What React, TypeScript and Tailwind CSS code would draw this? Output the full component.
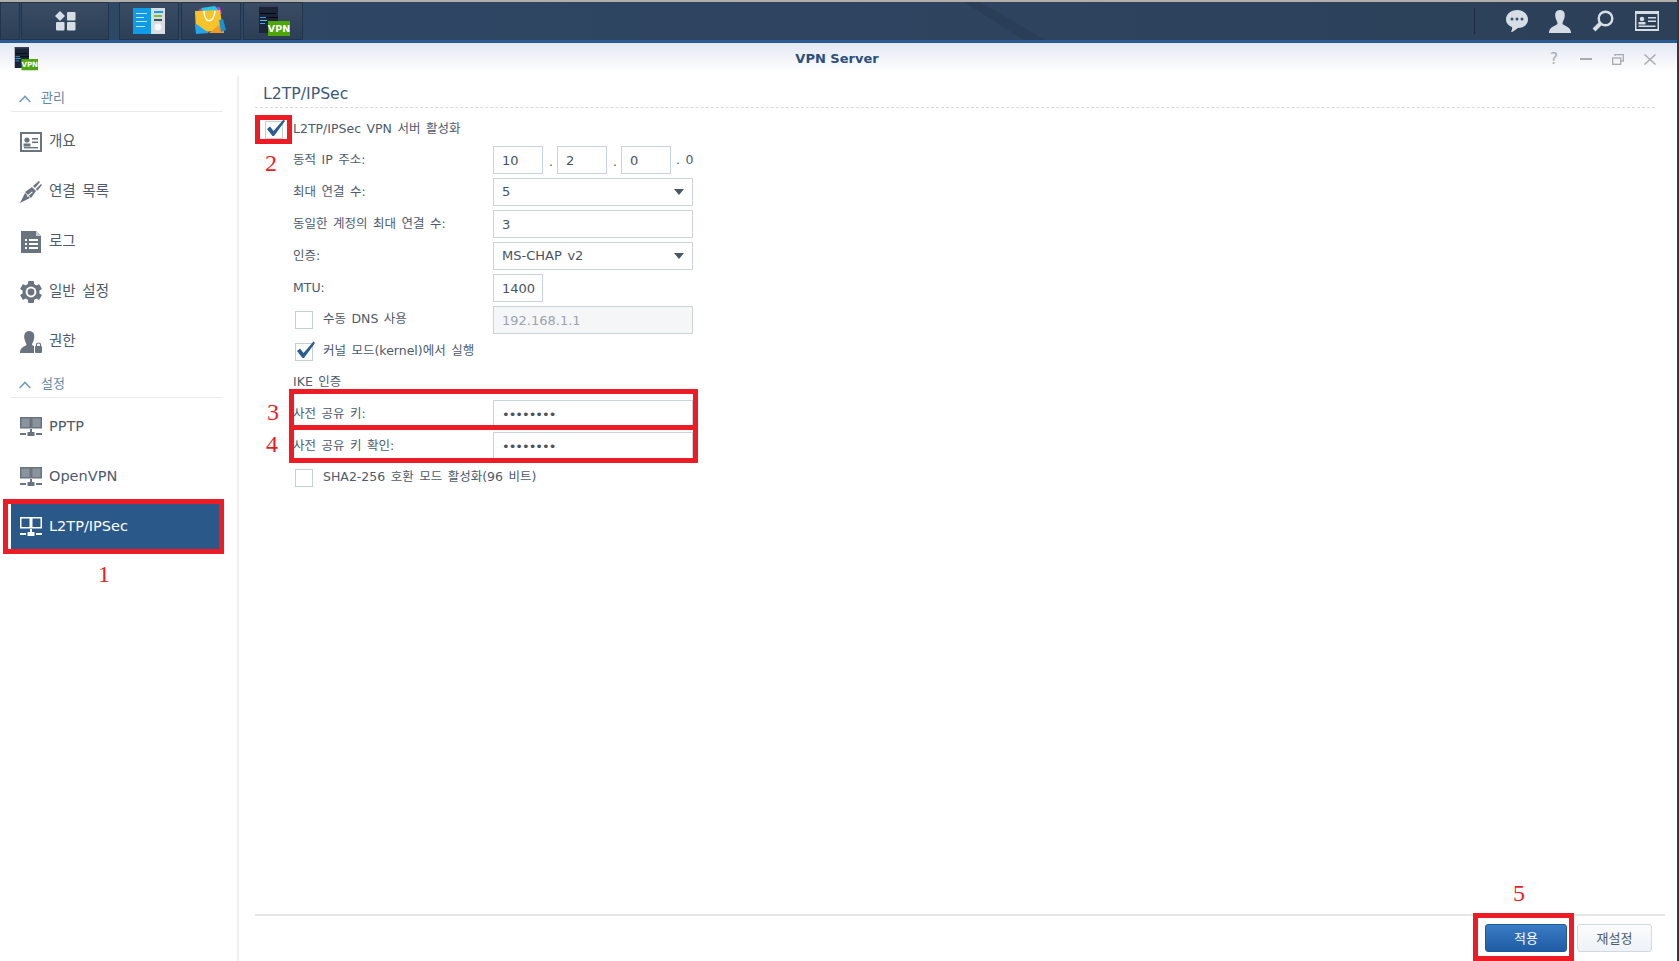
import type { ReactNode } from 'react';

const FONT = 'font-["DejaVu_Sans","Noto_Sans_CJK_KR",sans-serif]';

function VpnIcon({ size }: { size: number }) {
  return (
    <svg width={size} height={size} viewBox="0 0 32 32">
      <rect x="1" y="0" width="19" height="28" fill="#1c2438" />
      <rect x="1" y="0" width="19" height="2" fill="#39425c" />
      <rect x="2" y="8" width="16" height="1" fill="#05080f" />
      <rect x="2" y="12" width="6" height="1" fill="#2f9de0" />
      <rect x="8" y="12" width="12" height="1" fill="#05080f" />
      <rect x="2" y="15" width="7" height="1" fill="#57c6f0" />
      <rect x="2" y="18" width="5" height="1" fill="#37b0e8" />
      <rect x="10" y="16" width="22" height="15" fill="#4fa60a" />
      <text x="21" y="27" textAnchor="middle" fontSize="9.5" fontWeight="700" fill="#ffffff" fontFamily="DejaVu Sans">
        VPN
      </text>
    </svg>
  );
}

function StoreIcon() {
  return (
    <svg width="32" height="30" viewBox="0 0 32 30">
      <polygon points="4,3 25,1 27,8 5,8" fill="#b43ee0" />
      <polygon points="6,2 20,0 24,5 8,5" fill="#27c6e8" />
      <polygon points="0,5 25,4 28,24 1,27" fill="#f6c42a" />
      <polygon points="0,17 14,27 1,28" fill="#23a5ea" />
      <polygon points="14,27 28,16 29,27" fill="#f19a2a" />
      <path d="M9 5 C9 18 19 18 20 5" fill="none" stroke="#ffffff" strokeWidth="1.4" />
      <polygon points="24,14 28,13 31,24 26,26" fill="#1e8fd0" />
    </svg>
  );
}

function PanelIcon() {
  return (
    <svg width="32" height="26" viewBox="0 0 32 26">
      <rect x="0" y="0" width="32" height="26" fill="#0f9be8" />
      <rect x="18" y="0" width="14" height="26" fill="#d8dde2" />
      <rect x="21" y="3" width="9" height="2" fill="#1e9ee0" />
      <rect x="21" y="7" width="8" height="2" fill="#7cc22e" />
      <rect x="21" y="11" width="8" height="2" fill="#3d4f60" />
      <circle cx="25" cy="19" r="3.5" fill="#f5f7f9" />
      <rect x="3" y="5" width="11" height="1" fill="#bfe6fb" />
      <rect x="3" y="9" width="8" height="1" fill="#bfe6fb" />
      <rect x="3" y="13" width="11" height="1" fill="#bfe6fb" />
      <rect x="3" y="18" width="9" height="1" fill="#bfe6fb" />
    </svg>
  );
}

function CardIcon({ color = '#6a7480', size = 22 }: { color?: string; size?: number }) {
  return (
    <svg width={size} height={size - 2} viewBox="0 0 22 20">
      <rect x="0" y="0" width="22" height="20" fill={color} />
      <rect x="2" y="2" width="18" height="16" fill="#ffffff" />
      <circle cx="7" cy="8" r="2.6" fill={color} />
      <rect x="3.5" y="11.5" width="7" height="3" fill={color} />
      <rect x="12" y="6" width="6" height="1.6" fill={color} />
      <rect x="12" y="9.5" width="6" height="1.6" fill={color} />
      <rect x="4" y="15" width="14" height="1.4" fill={color} />
    </svg>
  );
}

function PlugIcon() {
  return (
    <svg width="22" height="22" viewBox="0 0 22 22" fill="#6a7480">
      <polygon points="0,22 5,12 10,17" />
      <polygon points="5,11 12,6 16,10 11,17" />
      <polygon points="13,5 19,0 20,1 15,7" />
      <polygon points="16,8 21,3 22,4 17,10" />
      <rect x="6" y="13" width="7" height="1.2" fill="#ffffff" transform="rotate(-40 9 13)" />
    </svg>
  );
}

function LogIcon() {
  return (
    <svg width="22" height="22" viewBox="0 0 20 22">
      <path d="M0 0 H15 L20 5 V22 H0 Z" fill="#6a7480" />
      <path d="M15 0 L20 5 H15 Z" fill="#c8ced4" />
      <g fill="#ffffff">
        <rect x="4" y="8" width="2" height="2" />
        <rect x="8" y="8" width="9" height="2" />
        <rect x="4" y="12" width="2" height="2" />
        <rect x="8" y="12" width="9" height="2" />
        <rect x="4" y="16" width="2" height="2" />
        <rect x="8" y="16" width="9" height="2" />
      </g>
    </svg>
  );
}

function GearIcon() {
  return (
    <svg width="22" height="22" viewBox="0 0 22 22">
      <g fill="#6a7480">
        <circle cx="11" cy="11" r="8.5" />
        {[0, 60, 120, 180, 240, 300].map((a) => (
          <rect key={a} x="8" y="0" width="6" height="5" rx="1" transform={`rotate(${a} 11 11)`} />
        ))}
      </g>
      <circle cx="11" cy="11" r="5.4" fill="#ffffff" />
      <circle cx="11" cy="11" r="3.4" fill="#6a7480" />
    </svg>
  );
}

function PrivilegeIcon() {
  return (
    <svg width="22" height="22" viewBox="0 0 22 22">
      <path d="M9 0 C14 0 15 4 14 8 C13.500 11 12 12 12 14 L14 15 V22 H0 C0 17 3 16 6.500 14 C6.500 12 5 11 4.500 8 C3.500 4 5 0 9 0 Z" fill="#6a7480" />
      <rect x="15" y="15" width="7" height="7" rx="1" fill="#6a7480" />
      <path d="M16.500 15 V13.500 C16.500 11.500 20.500 11.500 20.500 13.500 V15" fill="none" stroke="#6a7480" strokeWidth="1.2" />
    </svg>
  );
}

function NetIcon({ color = '#6a7480', fill = '#8b939c' }: { color?: string; fill?: string }) {
  return (
    <svg width="22" height="20" viewBox="0 0 22 20">
      <rect x="0.750" y="0.750" width="9.500" height="10" fill={fill} stroke={color} strokeWidth="1.500" />
      <rect x="11.750" y="0.750" width="9.500" height="10" fill={fill} stroke={color} strokeWidth="1.500" />
      <rect x="10" y="12" width="2" height="3" fill={color} />
      <rect x="7.500" y="15" width="7" height="4" fill={color} />
      <rect x="0" y="16" width="6" height="2" fill={color} />
      <rect x="16" y="16" width="6" height="2" fill={color} />
    </svg>
  );
}

function Chevron() {
  return (
    <svg width="12" height="8" viewBox="0 0 12 8" fill="none" stroke="#6f9dbf" strokeWidth="1.6">
      <path d="M0.700 7 L6 1.500 L11.300 7" />
    </svg>
  );
}

function SectionHeader({ label, className }: { label: string; className: string }) {
  return (
    <div className={`ml-[11px] mr-[14px] flex items-end gap-[10px] border-b border-[#e8eaed] pl-[8px] pb-[5px] text-[13px] text-[#5f89a8] ${className}`}>
      <span className="mb-[3px]">
        <Chevron />
      </span>
      <span className="leading-[16px]">{label}</span>
    </div>
  );
}

function NavItem({ icon, label, active }: { icon: ReactNode; label: string; active?: boolean }) {
  return (
    <div
      className={`mb-[5px] ml-[8px] mr-[17px] flex h-[45px] items-center gap-[7px] text-[14.500px] [word-spacing:2px] ${
        active ? 'border-l-[3px] border-white bg-[#2a5889] pl-[9px] text-white' : 'pl-[12px] text-[#4c5b6b]'
      }`}
    >
      <span className="flex w-[22px] justify-center">{icon}</span>
      <span>{label}</span>
    </div>
  );
}

function Sidebar() {
  return (
    <aside className="mt-[4px] w-[239px] shrink-0 border-r-2 border-[#eceef0]">
      <SectionHeader label="관리" className="h-[36px]" />
      <div className="pt-[7px]">
        <NavItem icon={<CardIcon />} label="개요" />
        <NavItem icon={<PlugIcon />} label="연결 목록" />
        <NavItem icon={<LogIcon />} label="로그" />
        <NavItem icon={<GearIcon />} label="일반 설정" />
        <NavItem icon={<PrivilegeIcon />} label="권한" />
      </div>
      <SectionHeader label="설정" className="h-[29px]" />
      <div className="pt-[6px]">
        <NavItem icon={<NetIcon />} label="PPTP" />
        <NavItem icon={<NetIcon />} label="OpenVPN" />
        <NavItem icon={<NetIcon color="#ffffff" fill="#2a5889" />} label="L2TP/IPSec" active />
      </div>
    </aside>
  );
}

function Check({ checked }: { checked?: boolean }) {
  return (
    <span className="relative block h-[18px] w-[18px] shrink-0 border border-[#c4cfdc] bg-white">
      {checked && (
        <svg className="absolute -left-[1px] -top-[4px]" width="22" height="20" viewBox="0 0 22 20">
          <path d="M2 11 L5 8.500 L8.500 13 L18.500 1.500 L20 3 L9 18 L7.500 18 Z" fill="#2d5c92" />
        </svg>
      )}
    </span>
  );
}

function Field({ value, width, disabled, type }: { value: string; width: string; disabled?: boolean; type?: string }) {
  return (
    <input
      readOnly
      type={type ?? 'text'}
      value={value}
      className={`h-[28px] ${width} border border-[#c8d3df] pl-[8px] text-[13px] outline-none ${
        type === 'password' ? 'tracking-[-1px]' : ''
      } ${disabled ? 'bg-[#f4f6f8] text-[#9aa4ae]' : 'bg-white text-[#47535f]'}`}
    />
  );
}

function SelectField({ value }: { value: string }) {
  return (
    <div className="flex h-[28px] w-[200px] items-center justify-between border border-[#c8d3df] bg-white pl-[8px] pr-[8px] text-[13px] text-[#47535f]">
      <span>{value}</span>
      <span className="h-0 w-0 border-x-[5px] border-t-[6px] border-x-transparent border-t-[#4a5661]" />
    </div>
  );
}

function Row({ label, children }: { label: string; children: ReactNode }) {
  return (
    <div className="mb-[4px] flex h-[28px] items-center">
      <span className="w-[200px] text-[#4c5b6b]">{label}</span>
      {children}
    </div>
  );
}

function CheckRow({ label, checked, children }: { label: string; checked?: boolean; children?: ReactNode }) {
  return (
    <div className="mb-[4px] flex h-[28px] items-center">
      <span className="flex w-[200px] items-center">
        <span className="ml-[2px] mr-[10px]">
          <Check checked={checked} />
        </span>
        <span className="whitespace-nowrap pb-[2px] text-[#4c5b6b]">{label}</span>
      </span>
      {children}
    </div>
  );
}

function Form() {
  return (
    <div className="flex-1 pl-[54px] text-[12.500px] [word-spacing:1.500px]">
      <div className="mb-[2px] mt-[8px] flex h-[28px] items-center text-[#4c5b6b]">
        <span className="-ml-[28px] mr-[10px]">
          <Check checked />
        </span>
        <span className="pb-[2px]">L2TP/IPSec VPN 서버 활성화</span>
      </div>
      <Row label="동적 IP 주소:">
        <Field value="10" width="w-[50px]" />
        <span className="w-[14px] pl-[6px] pt-[4px] text-[#4c5b6b]">.</span>
        <Field value="2" width="w-[50px]" />
        <span className="w-[14px] pl-[6px] pt-[4px] text-[#4c5b6b]">.</span>
        <Field value="0" width="w-[50px]" />
        <span className="pl-[5px] text-[#4c5b6b]">. 0</span>
      </Row>
      <Row label="최대 연결 수:">
        <SelectField value="5" />
      </Row>
      <Row label="동일한 계정의 최대 연결 수:">
        <Field value="3" width="w-[200px]" />
      </Row>
      <Row label="인증:">
        <SelectField value="MS-CHAP v2" />
      </Row>
      <Row label="MTU:">
        <Field value="1400" width="w-[50px]" />
      </Row>
      <CheckRow label="수동 DNS 사용">
        <Field value="192.168.1.1" width="w-[200px]" disabled />
      </CheckRow>
      <CheckRow label="커널 모드(kernel)에서 실행" checked />
      <div className="mb-[6px] flex h-[24px] items-center text-[#4c5b6b]">IKE 인증</div>
      <Row label="사전 공유 키:">
        <Field value="12345678" width="w-[200px]" type="password" />
      </Row>
      <Row label="사전 공유 키 확인:">
        <Field value="12345678" width="w-[200px]" type="password" />
      </Row>
      <CheckRow label="SHA2-256 호환 모드 활성화(96 비트)" />
    </div>
  );
}

function Main() {
  return (
    <main className="flex min-w-0 flex-1 flex-col">
      <div className="ml-[16px] mr-[22px] flex h-[36px] items-center border-b border-dashed border-[#d8dce0] pl-[8px] pt-[8px] text-[15.700px] text-[#3e5a78]">
        L2TP/IPSec
      </div>
      <Form />
      <div className="ml-[16px] mr-[12px] flex h-[47px] justify-end gap-[10px] border-t-2 border-[#e4e6e8] pr-[13px] pt-[8px] text-[13px]">
        <button className="h-[28px] w-[82px] rounded-[3px] border border-[#1d5a9c] bg-gradient-to-b from-[#3a7cc6] to-[#1f5ca3] pt-[2px] text-white">
          적용
        </button>
        <button className="h-[28px] w-[75px] rounded-[3px] border border-[#d0d8e2] bg-gradient-to-b from-[#fbfcfd] to-[#eef2f6] pt-[2px] text-[#4c5b6b]">
          재설정
        </button>
      </div>
    </main>
  );
}

function TaskButton({ width, children }: { width: string; children?: ReactNode }) {
  return (
    <div className={`flex h-[38px] ${width} items-center justify-center border border-[#22344a] bg-gradient-to-b from-[#3a4c63] to-[#2b3f57]`}>
      {children}
    </div>
  );
}

function Taskbar() {
  return (
    <header className="relative flex h-[43px] shrink-0 items-center justify-between border-t-2 border-b-[3px] border-t-[#b4aeaa] border-b-[#2a5b95] bg-gradient-to-r from-[#2e4866] via-[#2e4460] to-[#2c4058]">
      <svg className="absolute left-[960px] top-0" width="85" height="38" viewBox="0 0 85 38">
        <polygon points="4,0 20,0 85,38 64,38" fill="#27384d" fillOpacity="0.4" />
      </svg>
      <div className="relative flex items-center">
        <TaskButton width="w-[20px]" />
        <div className="w-[1px]" />
        <TaskButton width="w-[88px]">
          <svg width="21" height="20" viewBox="0 0 21 20" fill="#d6dde5">
            <polygon points="5,0 10,5 5,10 0,5" />
            <rect x="12" y="1" width="8.500" height="8.500" rx="1" />
            <rect x="1" y="11" width="8.500" height="8.500" rx="1" />
            <rect x="12" y="11" width="8.500" height="8.500" rx="1" />
          </svg>
        </TaskButton>
        <div className="w-[10px]" />
        <TaskButton width="w-[60px]">
          <PanelIcon />
        </TaskButton>
        <div className="w-[2px]" />
        <TaskButton width="w-[60px]">
          <StoreIcon />
        </TaskButton>
        <div className="w-[2px]" />
        <TaskButton width="w-[60px]">
          <span className="ml-[2px]">
            <VpnIcon size={32} />
          </span>
        </TaskButton>
      </div>
      <div className="relative flex items-center gap-[21px] pr-[18px]">
        <div className="mr-[10px] h-[26px] w-[1px] bg-[#1c2a3b]" />
        <svg width="22" height="24" viewBox="0 0 22 24">
          <path d="M11 1 C17 1 22 5 22 10.500 C22 16 17 19 12 19 C9 21 7 23 5 23 C6 21 6.500 19 6 18 C2.500 16.500 0 14 0 10.500 C0 5 5 1 11 1 Z" fill="#d6dde5" />
          <circle cx="6" cy="10" r="1.500" fill="#3a5068" />
          <circle cx="11" cy="10" r="1.500" fill="#3a5068" />
          <circle cx="16" cy="10" r="1.500" fill="#3a5068" />
        </svg>
        <svg width="22" height="23" viewBox="0 0 22 23">
          <path d="M11 0 C15 0 16.500 3.500 15.500 7.500 C15 10 13.500 11.500 13.500 14 C16 16 22 17 22 23 H0 C0 17 6 16 8.500 14 C8.500 11.500 7 10 6.500 7.500 C5.500 3.500 7 0 11 0 Z" fill="#d6dde5" />
        </svg>
        <svg width="22" height="22" viewBox="0 0 22 22" fill="none" stroke="#d6dde5">
          <circle cx="13.500" cy="8.500" r="6.800" strokeWidth="2.400" />
          <path d="M8.500 13.500 L2 20" strokeWidth="4" />
        </svg>
        <svg width="24" height="20" viewBox="0 0 24 20">
          <rect x="0" y="0" width="24" height="20" fill="#d6dde5" />
          <rect x="1.500" y="3" width="21" height="15" fill="#2c4058" />
          <circle cx="7" cy="8" r="2.300" fill="#d6dde5" />
          <rect x="3.500" y="11" width="7" height="2.500" fill="#d6dde5" />
          <rect x="13" y="6" width="8" height="1.500" fill="#d6dde5" />
          <rect x="13" y="9.500" width="8" height="1.500" fill="#d6dde5" />
          <rect x="3.500" y="14.500" width="17" height="1.500" fill="#d6dde5" />
        </svg>
      </div>
    </header>
  );
}

function TitleBar() {
  return (
    <div className="flex h-[29px] shrink-0 items-center bg-gradient-to-b from-[#e3e8f2] to-white pl-[14px] pr-[20px] pt-[3px]">
      <div className="flex-1">
        <VpnIcon size={24} />
      </div>
      <span className="ml-[3px] text-[13px] font-bold text-[#2c4f7c]">VPN Server</span>
      <div className="flex flex-1 items-center justify-end gap-[18px] text-[#a6abb1]">
        <span className="w-[14px] text-center text-[15px] leading-none">?</span>
        <span className="flex w-[14px] justify-center">
          <span className="h-[2px] w-[12px] bg-[#a6abb1]" />
        </span>
        <span className="flex w-[14px] justify-center">
          <svg width="12" height="11" viewBox="0 0 12 11" fill="none" stroke="#a6abb1" strokeWidth="1.300">
            <rect x="0.700" y="4" width="8" height="6.300" />
            <path d="M3 2 V0.700 H11.300 V7 H9" />
          </svg>
        </span>
        <span className="flex w-[14px] justify-center">
          <svg width="12" height="11" viewBox="0 0 12 11" fill="none" stroke="#a6abb1" strokeWidth="1.400">
            <path d="M0.500 0.500 L11.500 10.500 M11.500 0.500 L0.500 10.500" />
          </svg>
        </span>
      </div>
    </div>
  );
}

function Annotations() {
  return (
    <div className='pointer-events-none absolute inset-0 font-["Liberation_Serif",serif] text-[24px] leading-none text-[#ed1c24]'>
      <div className="absolute left-[3px] top-[499px] h-[55px] w-[221px] border-[5px] border-[#ed1c24]" />
      <div className="absolute left-[255px] top-[115px] h-[29px] w-[37px] border-[5px] border-[#ed1c24]" />
      <div className="absolute left-[289px] top-[389px] h-[41px] w-[409px] border-[5px] border-[#ed1c24]" />
      <div className="absolute left-[289px] top-[425px] h-[38px] w-[409px] border-[5px] border-[#ed1c24]" />
      <div className="absolute left-[1473px] top-[913px] h-[48px] w-[101px] border-[5px] border-[#ed1c24]" />
      <span className="absolute left-[98px] top-[562px]">1</span>
      <span className="absolute left-[265px] top-[151px]">2</span>
      <span className="absolute left-[267px] top-[400px]">3</span>
      <span className="absolute left-[266px] top-[432px]">4</span>
      <span className="absolute left-[1513px] top-[881px]">5</span>
    </div>
  );
}

export default function App() {
  return (
    <div className={`relative flex h-[961px] w-full flex-col overflow-hidden border-r-2 border-[#33383f] bg-white ${FONT}`}>
      <Taskbar />
      <TitleBar />
      <div className="flex min-h-0 flex-1">
        <Sidebar />
        <Main />
      </div>
      <Annotations />
    </div>
  );
}
